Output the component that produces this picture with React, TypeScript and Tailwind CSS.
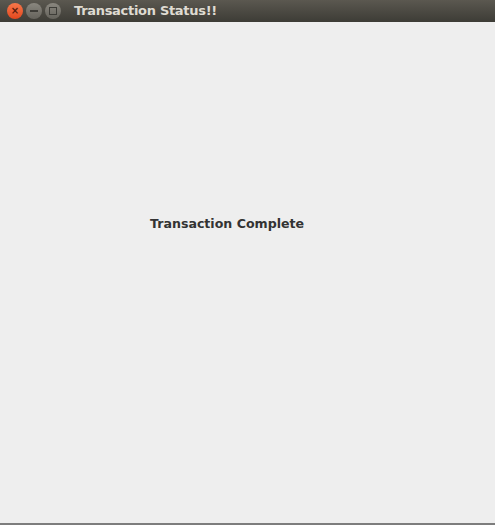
export default function App() {
  return (
    <div className="flex h-[525px] w-[495px] flex-col bg-[#eeeeee] font-['DejaVu_Sans',sans-serif]">
      <div className="flex h-[22px] shrink-0 items-center bg-gradient-to-b from-[#5b5850] to-[#3d3c36] pl-[7px]">
        <div className="flex items-center gap-[3px]">
          <span className="flex h-[16px] w-[16px] items-center justify-center rounded-full bg-gradient-to-b from-[#f7774a] to-[#e2471c] text-[10px] font-bold leading-none text-[#5a1c0c]">
            ×
          </span>
          <span className="flex h-[16px] w-[16px] items-center justify-center rounded-full bg-gradient-to-b from-[#8a877f] to-[#65635c]">
            <span className="h-[2px] w-[8px] bg-[#3e3d38]" />
          </span>
          <span className="flex h-[16px] w-[16px] items-center justify-center rounded-full bg-gradient-to-b from-[#8a877f] to-[#65635c]">
            <span className="h-[8px] w-[8px] border-[1.5px] border-[#3e3d38]" />
          </span>
        </div>
        <span className="ml-[13px] text-[13px] font-bold tracking-[-0.3px] text-[#dfdbd2]">Transaction Status!!</span>
      </div>
      <div className="flex flex-1 flex-col">
        <div className="pl-[150px] pt-[193px] text-[12.6px] font-bold text-[#333333]">Transaction Complete</div>
      </div>
      <div className="h-[2px] shrink-0 bg-[#7d7d7d]" />
    </div>
  );
}
